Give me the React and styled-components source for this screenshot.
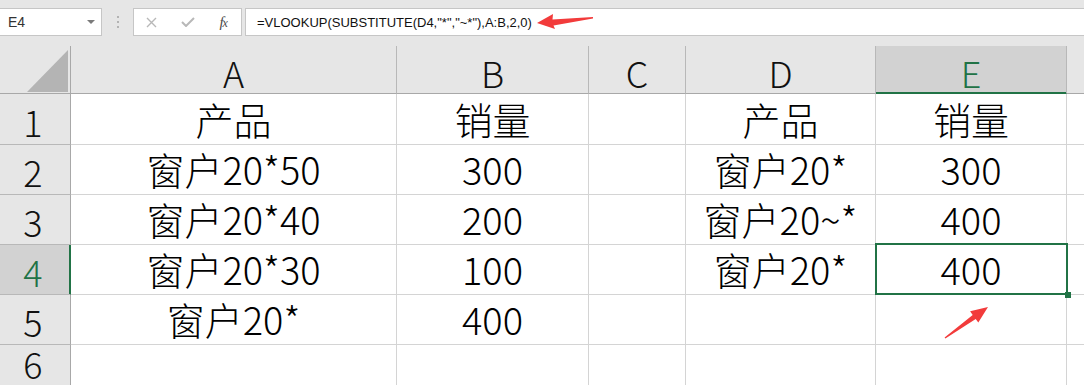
import React from "react";
import styled, { createGlobalStyle, css } from "styled-components";

const Global = createGlobalStyle`
  html, body { margin: 0; padding: 0; background: #fff; }
  body { width: 1084px; height: 385px; overflow: hidden; }
`;

const CJK = `"Noto Sans CJK SC", "Noto Sans", sans-serif`;
const GREEN = "#217346";

const Page = styled.div`
  position: relative;
  width: 1084px;
  height: 385px;
  overflow: hidden;
  background: #fff;
`;

const FormulaBar = styled.div`
  display: flex;
  align-items: flex-start;
  height: 46px;
  box-sizing: border-box;
  padding-top: 8px;
  background: #e6e6e6;
`;

const NameBox = styled.div`
  box-sizing: border-box;
  width: 102px;
  height: 28px;
  background: #fff;
  border: 1px solid #c6c6c6;
  border-left: none;
  display: flex;
  align-items: center;
  justify-content: space-between;
  padding: 0 6px 0 8px;
  font: 14px "Liberation Sans", Arial, sans-serif;
  color: #333;
`;

const Caret = styled.span`
  width: 0;
  height: 0;
  border-left: 4px solid transparent;
  border-right: 4px solid transparent;
  border-top: 4px solid #7a7a7a;
`;

const Grip = styled.div`
  width: 31px;
  height: 28px;
  display: flex;
  flex-direction: column;
  align-items: center;
  justify-content: center;
  gap: 3px;
`;

const Dot = styled.span`
  width: 2px;
  height: 2px;
  background: #b3b3b3;
`;

const FxBox = styled.div`
  box-sizing: border-box;
  width: 109px;
  height: 28px;
  background: #fff;
  border: 1px solid #c6c6c6;
  display: flex;
  align-items: center;
`;

const IconSlot = styled.span`
  width: 36px;
  height: 26px;
  display: flex;
  align-items: center;
  justify-content: center;
`;

const FxLabel = styled.span`
  font: italic 15px "Liberation Serif", "DejaVu Serif", serif;
  color: #4a4a4a;
  letter-spacing: -1px;
  & > small { font-size: 12px; }
`;

const FormulaInput = styled.div`
  box-sizing: border-box;
  flex: 1;
  height: 28px;
  margin-left: 3px;
  margin-right: -2px;
  background: #fff;
  border: 1px solid #c6c6c6;
  display: flex;
  align-items: center;
  padding-left: 11px;
`;

const FormulaText = styled.span`
  font: 13px "Liberation Sans", Arial, sans-serif;
  color: #111;
  white-space: pre;
`;

const Sheet = styled.div`
  display: grid;
  grid-template-columns: 71px 326px 192px 97px 190px 191px 1fr;
  grid-template-rows: 48px 51px repeat(4, 50px) 1fr;
  height: 339px;
  background: #fff;
`;

const headBase = css`
  box-sizing: border-box;
  background: ${(p) => (p.$sel ? "#d2d2d2" : "#e6e6e6")};
  color: ${(p) => (p.$sel ? GREEN : "#111")};
  font: 300 36px/1 ${CJK};
  display: flex;
  justify-content: center;
  align-items: flex-end;
`;

const Corner = styled.div`
  box-sizing: border-box;
  background: #e6e6e6;
  border-right: 1px solid #a8a8a8;
  border-bottom: 1px solid #a8a8a8;
  display: flex;
  justify-content: flex-end;
  align-items: flex-end;
  padding: 0 2px 1px 0;
`;

const CornerTriangle = styled.div`
  width: 41px;
  height: 42px;
  background: #b4b4b4;
  clip-path: polygon(100% 0, 100% 100%, 0 100%);
`;

const ColHead = styled.div`
  ${headBase};
  border-right: ${(p) => (p.$last ? "none" : "1px solid #b8b8b8")};
  border-bottom: 1px solid ${(p) => (p.$sel ? GREEN : "#a8a8a8")};
  box-shadow: ${(p) => (p.$sel ? `inset 0 -1px 0 ${GREEN}` : "none")};
  padding-bottom: 3px;
`;

const RowHead = styled.div`
  ${headBase};
  border-right: 1px solid ${(p) => (p.$sel ? GREEN : "#a8a8a8")};
  border-bottom: 1px solid #b8b8b8;
  box-shadow: ${(p) => (p.$sel ? `inset -1px 0 0 ${GREEN}` : "none")};
  padding: 0 4px 5px 0;
`;

const Cell = styled.div`
  position: relative;
  box-sizing: border-box;
  border-right: ${(p) => (p.$last ? "none" : "1px solid #d4d4d4")};
  border-bottom: 1px solid #d4d4d4;
  font: 300 38px/1 ${CJK};
  color: #000;
  display: flex;
  justify-content: center;
  align-items: flex-end;
  padding-bottom: 6px;
  white-space: nowrap;
`;

const Selection = styled.div`
  position: absolute;
  z-index: 3;
  box-sizing: border-box;
  top: -2px;
  left: -1px;
  right: -2px;
  bottom: -1px;
  border: 2px solid ${GREEN};
  pointer-events: none;
`;

const FillHandle = styled.div`
  position: absolute;
  right: -5px;
  bottom: -5px;
  width: 6px;
  height: 6px;
  background: ${GREEN};
`;

const Annotation = styled.svg`
  position: absolute;
  z-index: 4;
  left: 940px;
  top: 302px;
  overflow: visible;
`;

const TopArrow = styled.svg`
  margin-left: 4px;
  margin-top: -1px;
  flex: none;
`;

const cols = ["A", "B", "C", "D", "E", ""];
const rows = [
  ["产品", "销量", "", "产品", "销量"],
  ["窗户20*50", "300", "", "窗户20*", "300"],
  ["窗户20*40", "200", "", "窗户20~*", "400"],
  ["窗户20*30", "100", "", "窗户20*", "400"],
  ["窗户20*", "400", "", "", ""],
  ["", "", "", "", ""],
];

export default function App() {
  return (
    <Page>
      <Global />
      <FormulaBar>
        <NameBox>
          <span>E4</span>
          <Caret />
        </NameBox>
        <Grip>
          <Dot />
          <Dot />
          <Dot />
        </Grip>
        <FxBox>
          <IconSlot>
            <svg width="11" height="11" viewBox="0 0 11 11">
              <path d="M1 1 L10 10 M10 1 L1 10" stroke="#b8b8b8" strokeWidth="1.4" fill="none" />
            </svg>
          </IconSlot>
          <IconSlot>
            <svg width="14" height="10" viewBox="0 0 14 10">
              <path d="M1 5 L5 9 L13 1" stroke="#b8b8b8" strokeWidth="2" fill="none" />
            </svg>
          </IconSlot>
          <IconSlot>
            <FxLabel>
              f<small>x</small>
            </FxLabel>
          </IconSlot>
        </FxBox>
        <FormulaInput>
          <FormulaText>{'=VLOOKUP(SUBSTITUTE(D4,"*","~*"),A:B,2,0)'}</FormulaText>
          <TopArrow width="58" height="20" viewBox="0 0 58 20">
            <polygon
              points="1,11 17,2 16.5,7.5 57,5 57,6.5 17.5,13.5 19,17"
              fill="#f23b3b"
            />
          </TopArrow>
        </FormulaInput>
      </FormulaBar>

      <Sheet>
        <Corner>
          <CornerTriangle />
        </Corner>
        {cols.map((c, i) => (
          <ColHead key={"h" + i} $sel={c === "E"} $last={i === cols.length - 1}>
            {c}
          </ColHead>
        ))}
        {rows.map((r, ri) => (
          <React.Fragment key={"r" + ri}>
            <RowHead $sel={ri === 3}>{ri + 1}</RowHead>
            {r.map((v, ci) => (
              <Cell key={ci}>
                {v}
                {ri === 3 && ci === 4 && (
                  <Selection>
                    <FillHandle />
                  </Selection>
                )}
              </Cell>
            ))}
            <Cell $last />
          </React.Fragment>
        ))}
      </Sheet>

      <Annotation width="55" height="42" viewBox="0 0 55 42">
        <polygon
          points="48,5 30.1,9.2 32.7,12.9 4.6,35.4 5.4,36.6 35.7,16.9 38.3,20.6"
          fill="#f23b3b"
        />
      </Annotation>
    </Page>
  );
}
